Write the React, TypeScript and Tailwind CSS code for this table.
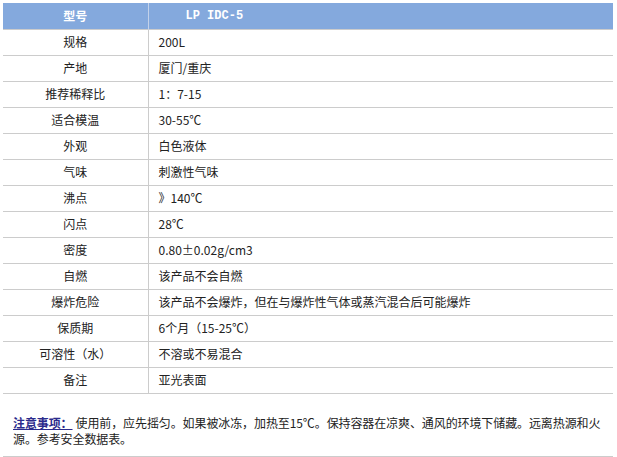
const rows: [string, string][] = [
  ["规格", "200L"],
  ["产地", "厦门/重庆"],
  ["推荐稀释比", "1：7-15"],
  ["适合模温", "30-55℃"],
  ["外观", "白色液体"],
  ["气味", "刺激性气味"],
  ["沸点", "》140℃"],
  ["闪点", "28℃"],
  ["密度", "0.80±0.02g/cm3"],
  ["自燃", "该产品不会自燃"],
  ["爆炸危险", "该产品不会爆炸，但在与爆炸性气体或蒸汽混合后可能爆炸"],
  ["保质期", "6个月（15-25℃）"],
  ["可溶性（水）", "不溶或不易混合"],
  ["备注", "亚光表面"],
];

export default function App() {
  return (
    <div className="min-h-screen bg-white pl-[3px] pt-[3px] pr-[4px] text-[12px] text-[#222] font-['Noto_Sans_CJK_SC',sans-serif]">
      <table className="w-full border-collapse">
        <thead>
          <tr className="h-[26px] bg-[#84a9dd] border-b border-[#cccccc] text-white font-bold">
            <th className="w-[145px] border-r border-[#c3d2ea] text-center font-bold">型号</th>
            <th className="pl-[37px] text-left font-bold font-['Liberation_Mono',monospace]">LP IDC-5</th>
          </tr>
        </thead>
        <tbody>
          {rows.map(([label, value]) => (
            <tr key={label} className="h-[26px] border-b border-[#cccccc]">
              <td className="border-r border-[#cccccc] text-center">{label}</td>
              <td className="pl-[10px]">{value}</td>
            </tr>
          ))}
        </tbody>
      </table>

      {/* 注意事项 */}
      <p className="mt-[21px] pl-[10px] pb-[9px] leading-[16px] tracking-[-0.1px] border-b border-[#cccccc]">
        <span className="font-bold text-[#2b2b8c] underline pr-[3px]">注意事项：</span>
        <span>使用前，应先摇匀。如果被冰冻，加热至15℃。保持容器在凉爽、通风的环境下储藏。远离热源和火源。参考安全数据表。</span>
      </p>
    </div>
  );
}
